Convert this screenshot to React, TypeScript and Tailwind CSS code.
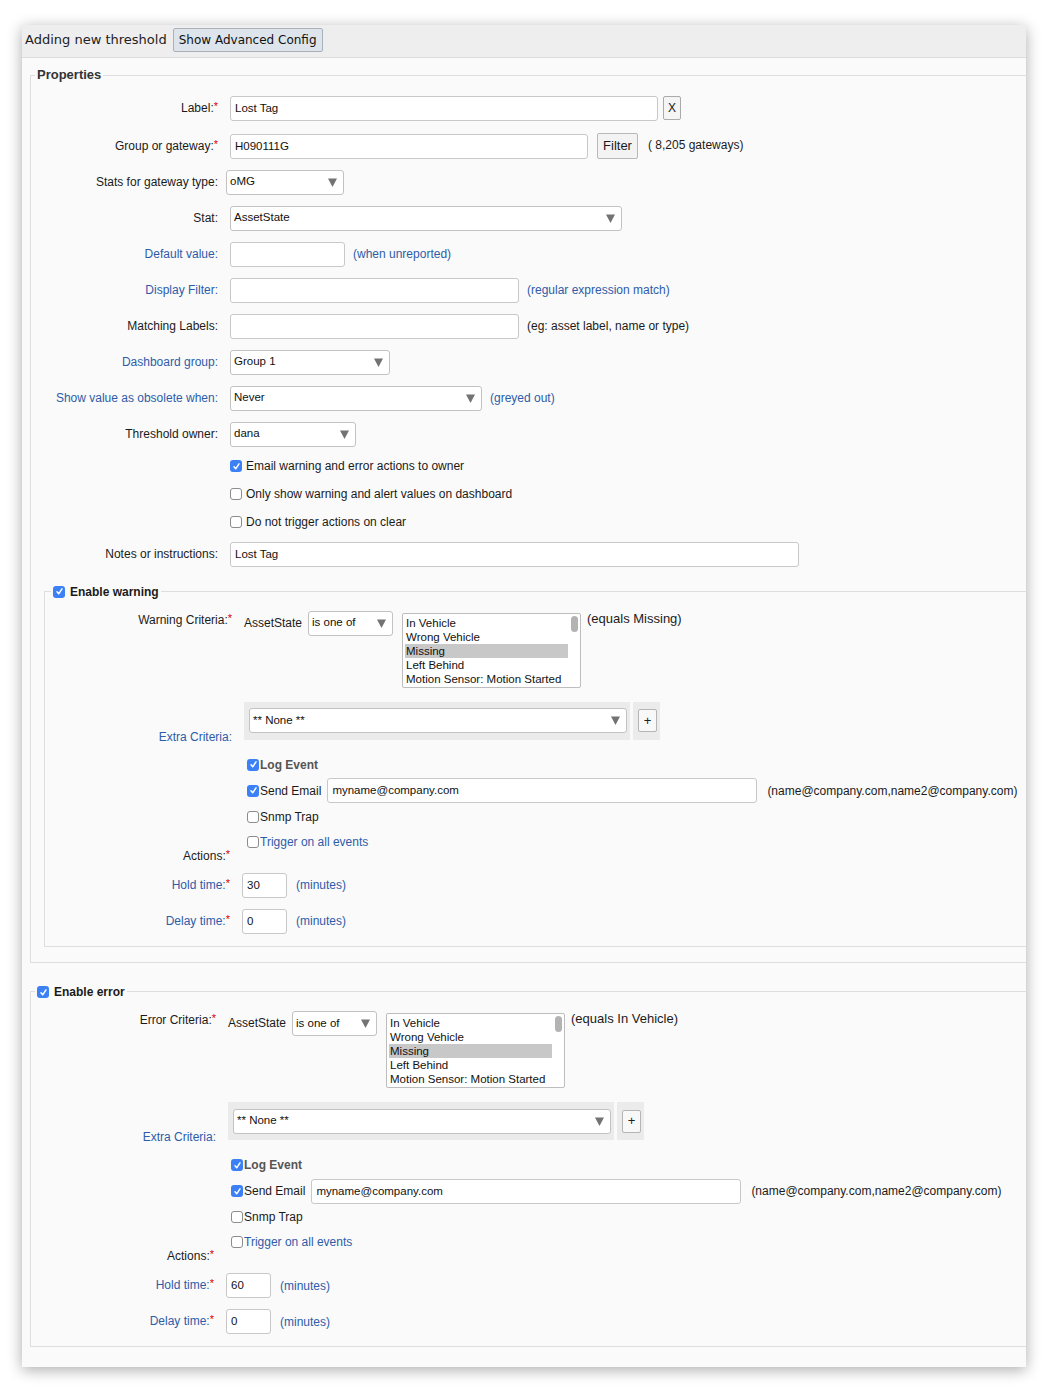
import React from 'react';

const BLUE = 'text-[#2e5ca8]';

type LabelProps = { text: string; blue?: boolean; req?: boolean; lw: string; className?: string; tight?: boolean };

const Label = ({ text, blue, req, lw, className = '', tight }: LabelProps) => (
  <div
    className={`${lw} shrink-0 ${tight ? 'pr-[14px]' : 'pr-3'} text-right text-[12px] leading-[15px] whitespace-nowrap ${
      blue ? BLUE : 'text-[#1a1a1a]'
    } ${className}`}
  >
    {text}
    {req && <span className="relative -top-[2px] text-[11px] text-[#d40000]">*</span>}
  </div>
);

const Check = ({ checked }: { checked?: boolean }) =>
  checked ? (
    <span className="flex h-[12px] w-[12px] shrink-0 items-center justify-center rounded-[3px] bg-[#3b80f5]">
      <svg width="9" height="9" viewBox="0 0 9 9">
        <path d="M2 4.8 3.7 6.8 7 1.8" stroke="white" strokeWidth="1.5" fill="none" strokeLinecap="round" strokeLinejoin="round" />
      </svg>
    </span>
  ) : (
    <span className="block h-[12px] w-[12px] shrink-0 rounded-[3px] border border-[#8c8c8c] bg-white" />
  );

const Select = ({ value, w, className = '' }: { value: string; w: string; className?: string }) => (
  <div
    className={`${w} flex h-[25px] shrink-0 items-center justify-between rounded-[3px] border border-[#c2c2c2] bg-white pl-[3px] pr-[6px] text-[11.5px] text-[#111] ${className}`}
  >
    <span>{value}</span>
    <svg width="9" height="9" viewBox="0 0 9 9">
      <path d="M0 0.5h9L4.5 9z" fill="#737373" />
    </svg>
  </div>
);

const Input = ({ value = '', w, className = '' }: { value?: string; w: string; className?: string }) => (
  <div
    className={`${w} flex h-[25px] shrink-0 items-center rounded-[3px] border border-[#c8c8c8] bg-white px-[4px] pt-[1px] text-[11.5px] text-[#111] ${className}`}
  >
    {value}
  </div>
);

const Hint = ({ text, blue, className = '' }: { text: string; blue?: boolean; className?: string }) => (
  <span className={`whitespace-nowrap text-[12px] ${blue ? BLUE : 'text-[#1a1a1a]'} ${className}`}>{text}</span>
);

const states = ['In Vehicle', 'Wrong Vehicle', 'Missing', 'Left Behind', 'Motion Sensor: Motion Started'];

const ListBox = ({ selected }: { selected: string }) => (
  <div className="ml-[9px] flex h-[75px] w-[179px] shrink-0 rounded-[2px] border border-[#bdbdbd] bg-white">
    <div className="flex-1 overflow-hidden pl-[2px] pt-[2px] text-[11.5px] leading-[14px] text-[#111]">
      {states.map((s) => (
        <div key={s} className={`whitespace-nowrap pl-[1px] ${s === selected ? 'bg-[#c8c8c8]' : ''}`}>
          {s}
        </div>
      ))}
    </div>
    <div className="flex w-[12px] justify-center pt-[2px]">
      <div className="h-[16px] w-[7px] rounded-full bg-[#b3b3b3]" />
    </div>
  </div>
);

const ActionCheck = ({ checked, text, bold, blue }: { checked?: boolean; text: string; bold?: boolean; blue?: boolean }) => (
  <>
    <span className="ml-[3px] flex">
      <Check checked={checked} />
    </span>
    <span
      className={`ml-[1px] whitespace-nowrap text-[12px] ${bold ? 'font-bold text-[#555]' : blue ? BLUE : 'text-[#1a1a1a]'}`}
    >
      {text}
    </span>
  </>
);

type CriteriaProps = { lw: string; title: string; equals: string; selected: string; hold: string };

const Criteria = ({ lw, title, equals, selected, hold }: CriteriaProps) => (
  <>
    {/* criteria */}
    <div className="flex items-start">
      <Label lw={lw} text={title} req />
      <span className="mt-[3px] text-[12px] leading-[15px] text-[#1a1a1a]">AssetState</span>
      <Select value="is one of" w="w-[85px]" className="-mt-[2px] ml-[6px]" />
      <ListBox selected={selected} />
      <span className="-mt-[2px] ml-[6px] whitespace-nowrap text-[13px] leading-[15px] text-[#1a1a1a]">{equals}</span>
    </div>

    {/* extra criteria */}
    <div className="mt-[14px] flex items-start">
      <Label lw={lw} text="Extra Criteria:" blue className="mt-[28px]" />
      <div className="flex h-[38px] gap-[3px]">
        <div className="flex w-[386px] items-center bg-[#ebebeb] pl-[5px]">
          <Select value="** None **" w="w-[378px]" className="h-[24px]" />
        </div>
        <div className="flex w-[27px] items-center bg-[#ebebeb] pl-[5px]">
          <div className="flex h-[23px] w-[19px] items-center justify-center rounded-[2px] border border-[#b5b5b5] bg-[#f8f8f8] text-[13px] text-[#222]">
            +
          </div>
        </div>
      </div>
    </div>

    {/* actions */}
    <div className="mt-[8px] flex items-start">
      <Label lw={lw} text="Actions:" req tight className="mt-[96px]" />
      <div className="flex flex-col">
        <div className="flex h-[24px] items-center">
          <ActionCheck checked text="Log Event" bold />
        </div>
        <div className="flex h-[28px] items-center">
          <ActionCheck checked text="Send Email" />
          <Input value="myname@company.com" w="w-[430px]" className="ml-[6px]" />
          <Hint text="(name@company.com,name2@company.com)" className="ml-[10px]" />
        </div>
        <div className="flex h-[24px] items-center">
          <ActionCheck text="Snmp Trap" />
        </div>
        <div className="flex h-[26px] items-center">
          <ActionCheck text="Trigger on all events" blue />
        </div>
      </div>
    </div>

    <div className="mt-[9px] flex items-center">
      <Label lw={lw} text="Hold time:" blue req tight />
      <Input value={hold} w="w-[45px]" className="-ml-[2px]" />
      <Hint text="(minutes)" blue className="ml-[9px]" />
    </div>
    <div className="mt-[11px] flex items-center">
      <Label lw={lw} text="Delay time:" blue req tight />
      <Input value="0" w="w-[45px]" className="-ml-[2px]" />
      <Hint text="(minutes)" blue className="ml-[9px]" />
    </div>
  </>
);

const PLW = 'w-[199px]';

const Row = ({
  label,
  blue,
  req,
  className = '',
  children,
}: {
  label: string;
  blue?: boolean;
  req?: boolean;
  className?: string;
  children?: React.ReactNode;
}) => (
  <div className={`flex h-[24px] items-center ${className}`}>
    <Label lw={PLW} text={label} blue={blue} req={req} />
    {children}
  </div>
);

const CheckRow = ({ checked, text }: { checked?: boolean; text: string }) => (
  <div className="flex h-[28px] items-center">
    <div className={`${PLW} shrink-0`} />
    <Check checked={checked} />
    <span className="ml-[4px] text-[12px] text-[#1a1a1a]">{text}</span>
  </div>
);

export default function App() {
  return (
    <div className="min-h-screen bg-white pb-[29px] pl-[22px] pt-[25px] font-['Liberation_Sans',Arial,sans-serif] text-[#1a1a1a]">
      <div className="w-[1004px] overflow-hidden bg-[#fafafa] pb-[20px] shadow-[0_3px_14px_rgba(0,0,0,0.33)]">
        {/* Header */}
        <div className="flex h-[33px] items-start border-b border-[#dcdcdc] bg-[#eeeeee] pl-[3px] pt-[3px]">
          <span className="font-['DejaVu_Sans',sans-serif] text-[13px] leading-[24px] text-[#222]">Adding new threshold</span>
          <div className="ml-[6px] flex h-[24px] w-[150px] items-center justify-center rounded-[2px] border border-[#a9b1ba] bg-[#dde4ec] font-['DejaVu_Sans',sans-serif] text-[12px] text-[#111]">
            Show Advanced Config
          </div>
        </div>

        {/* Properties */}
        <fieldset className="ml-[8px] mt-[9px] border border-r-0 border-[#dedede] pb-[15px] pt-[13px]">
          <legend className="ml-[4px] px-[2px] text-[13px] font-bold leading-[16px] text-[#333]">Properties</legend>

          <Row label="Label:" req>
            <Input value="Lost Tag" w="w-[428px]" />
            <div className="ml-[5px] flex h-[24px] w-[18px] items-center justify-center rounded-[2px] border border-[#aaaaaa] bg-[#f5f5f5] text-[12px]">
              X
            </div>
          </Row>
          <Row label="Group or gateway:" req className="mt-[13px] h-[26px]">
            <Input value="H090111G" w="w-[358px]" />
            <div className="ml-[9px] flex h-[26px] w-[41px] items-center justify-center rounded-[2px] border border-[#b8b8b8] bg-[#f3f3f3] text-[13px]">
              Filter
            </div>
            <Hint text="( 8,205 gateways)" className="-mt-[2px] ml-[10px]" />
          </Row>
          <Row label="Stats for gateway type:" className="mt-[11px]">
            <Select value="oMG" w="w-[118px]" className="-ml-[4px]" />
          </Row>
          <Row label="Stat:" className="mt-[12px]">
            <Select value="AssetState" w="w-[392px]" />
          </Row>
          <Row label="Default value:" blue className="mt-[12px]">
            <Input w="w-[115px]" />
            <Hint text="(when unreported)" blue className="ml-[8px]" />
          </Row>
          <Row label="Display Filter:" blue className="mt-[12px]">
            <Input w="w-[289px]" />
            <Hint text="(regular expression match)" blue className="ml-[8px]" />
          </Row>
          <Row label="Matching Labels:" className="mt-[12px]">
            <Input w="w-[289px]" />
            <Hint text="(eg: asset label, name or type)" className="ml-[8px]" />
          </Row>
          <Row label="Dashboard group:" blue className="mt-[12px]">
            <Select value="Group 1" w="w-[160px]" />
          </Row>
          <Row label="Show value as obsolete when:" blue className="mt-[12px]">
            <Select value="Never" w="w-[252px]" />
            <Hint text="(greyed out)" blue className="ml-[8px]" />
          </Row>
          <Row label="Threshold owner:" className="mt-[12px]">
            <Select value="dana" w="w-[126px]" />
          </Row>
          <div className="mt-[6px]">
            <CheckRow checked text="Email warning and error actions to owner" />
            <CheckRow text="Only show warning and alert values on dashboard" />
            <CheckRow text="Do not trigger actions on clear" />
          </div>
          <Row label="Notes or instructions:" className="mt-[6px]">
            <Input value="Lost Tag" w="w-[569px]" />
          </Row>

          {/* Warning */}
          <fieldset className="ml-[13px] mt-[17px] border border-r-0 border-[#dedede] pb-[12px] pt-[13px]">
            <legend className="ml-[6px] px-[2px] leading-[16px]">
              <span className="inline-flex items-center gap-[5px] text-[12px] font-bold text-[#1a1a1a]">
                <Check checked />
                Enable warning
              </span>
            </legend>
            <Criteria lw="w-[199px]" title="Warning Criteria:" equals="(equals Missing)" selected="Missing" hold="30" />
          </fieldset>
        </fieldset>

        {/* Error */}
        <fieldset className="ml-[8px] mt-[21px] border border-r-0 border-[#dedede] pb-[12px] pt-[13px]">
          <legend className="ml-[4px] px-[2px] leading-[16px]">
            <span className="inline-flex items-center gap-[5px] text-[12px] font-bold text-[#1a1a1a]">
              <Check checked />
              Enable error
            </span>
          </legend>
          <Criteria lw="w-[197px]" title="Error Criteria:" equals="(equals In Vehicle)" selected="Missing" hold="60" />
        </fieldset>
      </div>
    </div>
  );
}
